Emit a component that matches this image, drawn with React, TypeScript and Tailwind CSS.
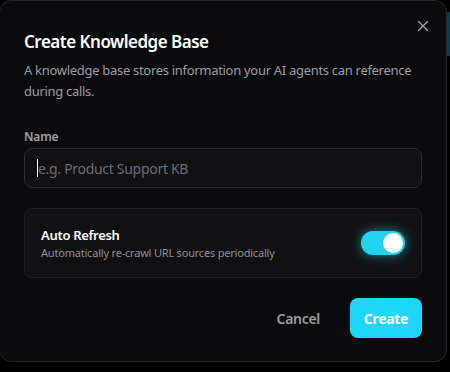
import { X } from 'lucide-react';
import { useState } from 'react';

export default function App() {
  const [autoRefresh, setAutoRefresh] = useState(true);

  return (
    <div
      className="relative w-[450px] h-[372px] overflow-hidden bg-black"
      style={{ fontFamily: '"Noto Sans", "Open Sans", sans-serif' }}
    >
      {/* page behind the modal, peeking at the right edge */}
      <div className="absolute right-0 top-[12px] h-[44px] w-[4px] bg-[#0f3a40]" />

      <div className="relative -ml-px w-[448px] h-[362px] rounded-xl border border-[#26262b] bg-[#0b0b0d] px-6 pt-[27px]">
        <button className="absolute right-[10px] top-[12px] p-1 text-[#a1a1aa]">
          <X size={18} strokeWidth={1.75} />
        </button>

        <h2 className="text-[17px] leading-7 font-semibold text-white tracking-[-0.5px]">
          Create Knowledge Base
        </h2>
        <p className="mt-[4px] text-[13px] leading-[21px] text-[#9b9ba4] tracking-[-0.3px]">
          A knowledge base stores information your AI agents can reference during calls.
        </p>

        <div className="mt-[27px]">
          <label className="block text-[12px] leading-4 font-semibold text-[#a1a1aa] tracking-[-0.2px]">Name</label>
          <div className="mt-[3px] flex h-[40px] items-center rounded-lg border border-[#2c2c32] bg-[#111114] px-3">
            <span className="h-[18px] w-px bg-white" />
            <input
              className="w-full bg-transparent text-[14px] tracking-[-0.3px] text-white placeholder:text-[#6c6c75] outline-none"
              placeholder="e.g. Product Support KB"
            />
          </div>
        </div>

        <div className="mt-[20px] flex h-[70px] items-center justify-between rounded-lg border border-[#1f1f24] bg-[#111114] pl-4 pr-4">
          <div>
            <div className="text-[13px] leading-5 font-semibold text-white tracking-[-0.3px]">Auto Refresh</div>
            <div className="text-[11px] leading-4 text-[#8e8e97] tracking-[-0.2px]">
              Automatically re-crawl URL sources periodically
            </div>
          </div>
          <button
            onClick={() => setAutoRefresh(!autoRefresh)}
            className="flex h-[24px] w-[44px] items-center rounded-full bg-[#22d3ee] px-[2px] shadow-[0_0_12px_rgba(34,211,238,0.6)]"
          >
            <span
              className={
                autoRefresh
                  ? 'ml-auto h-[20px] w-[20px] rounded-full bg-white'
                  : 'h-[20px] w-[20px] rounded-full bg-white'
              }
            />
          </button>
        </div>

        <div className="mt-[20px] flex items-center justify-end gap-[14px]">
          <button className="h-[40px] px-4 text-[14px] font-semibold text-[#9b9ba4] tracking-[-0.3px]">Cancel</button>
          <button className="h-[40px] w-[72px] rounded-lg bg-[#1fd6f9] text-[14px] font-bold text-white tracking-[-0.3px]">
            Create
          </button>
        </div>
      </div>
    </div>
  );
}
